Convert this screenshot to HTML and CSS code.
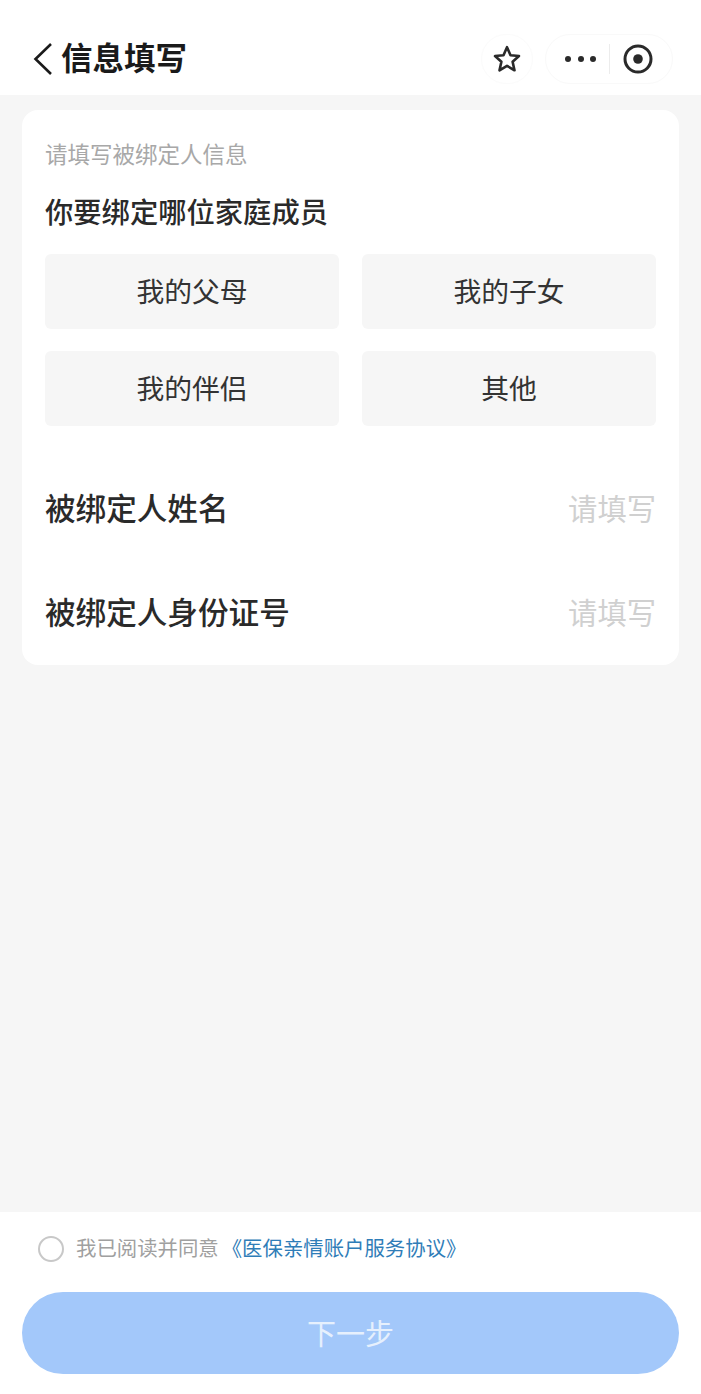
FILE: index.html
```html
<!DOCTYPE html>
<html lang="zh-CN">
<head>
<meta charset="utf-8">
<title>信息填写</title>
<link rel="stylesheet" href="styles.css">
</head>
<body>
<div class="page">
  <header class="nav">
    <svg class="back" width="22" height="34" viewBox="0 0 22 34"><path d="M19 2 L3.5 17 L19 32" fill="none" stroke="#1a1a1a" stroke-width="2.6"/></svg>
    <h1 class="nav-title">信息填写</h1>
    <div class="fav">
      <svg width="32" height="32" viewBox="0 0 32 32"><path d="M16 4.2 L19.5 12.2 L28 13 L21.6 18.8 L23.5 27.3 L16 22.8 L8.5 27.3 L10.4 18.8 L4 13 L12.5 12.2 Z" fill="none" stroke="#2a2a2a" stroke-width="2.6" stroke-linejoin="round"/></svg>
    </div>
    <div class="capsule">
      <div class="dots"><i></i><i></i><i></i></div>
      <span class="capsule-line"></span>
      <svg width="32" height="32" viewBox="0 0 32 32"><circle cx="16" cy="16" r="13" fill="none" stroke="#2a2a2a" stroke-width="3"/><circle cx="16" cy="16" r="4.8" fill="#2a2a2a"/></svg>
    </div>
  </header>

  <main class="main">
    <section class="card">
      <p class="hint">请填写被绑定人信息</p>
      <h2 class="question">你要绑定哪位家庭成员</h2>
      <div class="options">
        <div class="option">我的父母</div>
        <div class="option">我的子女</div>
        <div class="option">我的伴侣</div>
        <div class="option">其他</div>
      </div>
      <div class="field"><span class="label">被绑定人姓名</span><span class="placeholder">请填写</span></div>
      <div class="field"><span class="label">被绑定人身份证号</span><span class="placeholder">请填写</span></div>
    </section>
  </main>

  <footer class="footer">
    <div class="agree">
      <span class="radio"></span>
      <span class="agree-text">我已阅读并同意</span>
      <span class="agree-link">《医保亲情账户服务协议》</span>
    </div>
    <button class="next" type="button"><span class="next-text">下一步</span></button>
  </footer>
</div>
</body>
</html>
```
FILE: styles.css
```css
* { box-sizing: border-box; }
html, body { margin: 0; padding: 0; }
body {
  width: 701px;
  height: 1394px;
  overflow: hidden;
  background: #f6f6f6;
  font-family: "Noto Sans CJK SC", "Liberation Sans", sans-serif;
}
.page { display: flex; flex-direction: column; height: 1394px; }

.nav {
  height: 95px;
  flex: none;
  background: #fff;
  display: flex;
  align-items: center;
  padding: 23px 28px 0 32px;
}
.back { flex: none; margin-right: 7px; }
.nav-title {
  margin: 0 0 6px;
  font-size: 31.5px;
  line-height: 40px;
  font-weight: 700;
  color: #1a1a1a;
  flex: 1;
}
.fav {
  width: 52px;
  height: 50px;
  border: 1px solid #fbfbfb;
  border-radius: 25px;
  display: flex;
  align-items: center;
  justify-content: center;
  margin-right: 12px;
}
.capsule {
  width: 128px;
  height: 50px;
  border: 1px solid #f9f9f9;
  border-radius: 25px;
  display: flex;
  align-items: center;
  padding-left: 19px;
}
.dots { display: flex; gap: 6.5px; }
.dots i { width: 6px; height: 6px; border-radius: 50%; background: #2a2a2a; }
.capsule-line { width: 1px; height: 30px; background: #ececec; margin: 0 0 0 13px; }
.capsule svg { margin-left: 12px; }

.main { flex: 1; padding: 15px 22px 0 22px; }
.card {
  height: 555px;
  background: #fff;
  border-radius: 16px;
  padding: 26px 23px 0 23px;
}
.hint { margin: 0; font-size: 22.5px; line-height: 34px; color: #a8a8a8; }
.question {
  margin: 22px 0 0;
  font-size: 28.3px;
  line-height: 38px;
  font-weight: 500;
  color: #2a2a2a;
}
.options {
  display: grid;
  grid-template-columns: 294px 294px;
  grid-auto-rows: 75px;
  column-gap: 23px;
  row-gap: 22px;
  margin-top: 24px;
}
.option {
  background: #f6f6f6;
  border-radius: 6px;
  display: flex;
  align-items: center;
  justify-content: center;
  font-size: 27.8px;
  color: #333;
  padding-bottom: 3px;
}
.field {
  display: flex;
  justify-content: space-between;
  align-items: center;
  height: 44px;
  margin-top: 60px;
}
.label { font-size: 30.6px; font-weight: 500; color: #2a2a2a; line-height: 40px; margin-bottom: 3px; }
.placeholder { font-size: 29.3px; color: #d0d0d0; line-height: 40px; margin-bottom: 3px; }

.footer {
  height: 182px;
  flex: none;
  background: #fff;
  padding: 24px 22px 0 22px;
}
.agree { display: flex; align-items: center; height: 26px; padding-left: 16px; }
.radio {
  width: 26px;
  height: 26px;
  border: 2px solid #c8c8c8;
  border-radius: 50%;
  flex: none;
  margin-right: 12px;
}
.agree-text { font-size: 20.4px; color: #a0a0a0; line-height: 26px; white-space: nowrap; margin-bottom: 5px; }
.agree-link { font-size: 20.4px; color: #2f7db8; line-height: 26px; white-space: nowrap; margin: 0 0 5px 3px; }
.next {
  display: block;
  width: 657px;
  height: 82px;
  margin-top: 30px;
  border: 0;
  border-radius: 41px;
  background: #a3c8fa;
  color: #e6f0fd;
  font-family: inherit;
  font-size: 29px;
  padding: 0 0 3px;
}
```
